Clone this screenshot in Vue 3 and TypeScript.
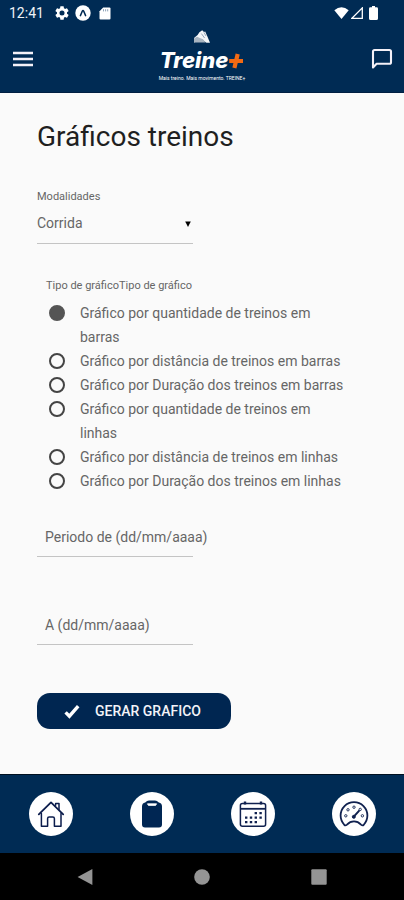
<script setup lang="ts">
import { ref } from 'vue'

const modality = ref('Corrida')
const modalities: string[] = ['Corrida', 'Caminhada', 'Ciclismo']

const chart = ref(0)
const charts: string[] = [
  'Gráfico por quantidade de treinos em barras',
  'Gráfico por distância de treinos em barras',
  'Gráfico por Duração dos treinos em barras',
  'Gráfico por quantidade de treinos em linhas',
  'Gráfico por distância de treinos em linhas',
  'Gráfico por Duração dos treinos em linhas',
]

const from = ref('')
const to = ref('')
</script>

<template>
  <div class="page">
    <header class="top">
      <div class="status">
        <span class="time">12:41</span>
        <svg class="gear" width="14" height="14" viewBox="2 2 20 20" fill="#fff">
          <path d="M19.14 12.94c.04-.3.06-.61.06-.94s-.02-.64-.07-.94l2.03-1.58a.49.49 0 0 0 .12-.61l-1.92-3.32a.49.49 0 0 0-.59-.22l-2.39.96a7 7 0 0 0-1.62-.94l-.36-2.54a.48.48 0 0 0-.48-.41h-3.84a.48.48 0 0 0-.47.41l-.36 2.54a7 7 0 0 0-1.62.94l-2.39-.96a.49.49 0 0 0-.59.22L2.74 8.87a.48.48 0 0 0 .12.61l2.03 1.58a6.6 6.6 0 0 0 0 1.88l-2.03 1.58a.49.49 0 0 0-.12.61l1.92 3.32c.12.22.37.29.59.22l2.39-.96c.5.38 1.03.7 1.62.94l.36 2.54c.05.24.24.41.48.41h3.84c.24 0 .44-.17.47-.41l.36-2.54a7 7 0 0 0 1.62-.94l2.39.96c.22.08.47 0 .59-.22l1.92-3.32a.48.48 0 0 0-.12-.61zM12 15.6a3.6 3.6 0 1 1 0-7.2 3.6 3.6 0 0 1 0 7.2z" />
        </svg>
        <svg class="expo" width="16" height="16" viewBox="0 0 16 16">
          <circle cx="8" cy="8" r="7.7" fill="#fff" />
          <path d="M5.4 10.6 7.3 6.2Q8 5 8.7 6.2L10.6 10.6" fill="none" stroke="#002b54" stroke-width="1.5" stroke-linecap="round" />
        </svg>
        <svg class="card" width="12" height="13" viewBox="0 0 12 13">
          <path d="M4.2.5H10.4Q11.5.5 11.5 1.6V11.4Q11.5 12.5 10.4 12.5H1.6Q.5 12.5 .5 11.4V4.2Z" fill="#fff" />
          <path d="M4.5 2.2V4.4M6.6 2.2V4.4M8.7 2.2V4.4" stroke="#8ea3b8" stroke-width="1" />
        </svg>
        <span class="grow"></span>
        <svg width="15" height="12" viewBox="0 0 15 12">
          <path d="M7.5 12 .3 3.2Q7.5-2.6 14.7 3.2Z" fill="#fff" />
        </svg>
        <svg class="signal" width="12" height="12" viewBox="0 0 12 12">
          <path d="M11.3.9V11.3H.9Z" fill="none" stroke="#fff" stroke-width="1.3" />
        </svg>
        <svg class="battery" width="9" height="14" viewBox="0 0 9 14">
          <path d="M3 0H6V1.3H7.6Q9 1.3 9 2.7V12.4Q9 14 7.4 14H1.6Q0 14 0 12.4V2.7Q0 1.3 1.4 1.3H3Z" fill="#fff" />
        </svg>
      </div>
      <div class="bar">
        <button class="icon-button" type="button" aria-label="Menu">
          <svg width="20" height="16" viewBox="0 0 20 16">
            <path d="M0 2H20M0 8H20M0 14H20" stroke="#f4f1f8" stroke-width="2.4" />
          </svg>
        </button>
        <div class="brand">
          <svg width="16" height="14" viewBox="0 0 16 14">
            <path d="M0 8 3.6 5 5.4 2.2 8.2.2 10 2 11.2 1.6 13.4 6.6 16 12.8 12.4 12.8 8 9.4 0 12.4Z" fill="#f4f6f8" />
            <path d="M0 8.6 3 6.8 5.8 8 9 9.2 11.6 12.6H0Z" fill="#a8b4c0" />
            <path d="M7.4 3.6 10.6 8M10 2.4 12 6" stroke="#6f87a0" stroke-width=".7" />
          </svg>
          <strong class="name">Treine<svg width="16" height="16" viewBox="0 0 16 16"><path d="M9.7 1 6.4 15M1.2 8H15" stroke="#f26a14" stroke-width="4.2" fill="none" /></svg></strong>
          <span class="tagline">Mais treino. Mais movimento. TREINE+</span>
        </div>
        <button class="icon-button" type="button" aria-label="Mensagens">
          <svg width="22" height="22" viewBox="0 0 22 22">
            <path d="M2 19.4V3.6Q2 2 3.6 2H18.4Q20 2 20 3.6V14.2Q20 15.8 18.4 15.8H5.6Z" fill="none" stroke="#f4f1f8" stroke-width="2.1" stroke-linejoin="round" />
          </svg>
        </button>
      </div>
    </header>

    <main class="content">
      <h1>Gráficos treinos</h1>
      <form @submit.prevent>
        <div class="select-field">
          <label class="caption" for="modality">Modalidades</label>
          <div class="select-box">
            <select id="modality" v-model="modality">
              <option v-for="m in modalities" :key="m">{{ m }}</option>
            </select>
            <svg class="arrow" width="6" height="6" viewBox="0 0 6 6">
              <path d="M.2.4H5.8L3 6Z" fill="#000" />
            </svg>
          </div>
        </div>

        <fieldset>
          <legend class="caption">Tipo de gráficoTipo de gráfico</legend>
          <label v-for="(c, i) in charts" :key="c" class="option">
            <input v-model="chart" type="radio" name="chart" :value="i" />
            <span>{{ c }}</span>
          </label>
        </fieldset>

        <div class="date-field">
          <label for="from">Periodo de (dd/mm/aaaa)</label>
          <input id="from" v-model="from" type="text" />
        </div>
        <div class="date-field">
          <label for="to">A (dd/mm/aaaa)</label>
          <input id="to" v-model="to" type="text" />
        </div>

        <button class="submit" type="submit">
          <svg width="16" height="15" viewBox="0 0 16 15">
            <path d="M1.6 8.4 5.4 12.2 14.2 2.2" fill="none" stroke="#fff" stroke-width="3.4" />
          </svg>
          GERAR GRAFICO
        </button>
      </form>
    </main>

    <nav class="tabs">
      <a href="#inicio" aria-label="Início">
        <svg width="28" height="28" viewBox="0 0 28 28" fill="none" stroke="#0b1c4c" stroke-width="1.5" stroke-linejoin="round" stroke-linecap="round">
          <path d="M1.8 14.4 14 2.4 26.2 14.4" stroke-width="1.8" />
          <path d="M18.6 5.2V3.6H22V9.6" />
          <path d="M4.4 13.4V26.2H10.6V18.6Q10.6 17 12.2 17H15.8Q17.4 17 17.4 18.6V26.2H24V13.4" />
        </svg>
      </a>
      <a href="#treinos" aria-label="Treinos">
        <svg width="22" height="28" viewBox="0 0 22 28">
          <path d="M4.2 2.6Q6 .4 8 .4H14Q16 .4 17.8 2.6Q21 3.4 21 6.4V24.6Q21 27.6 18 27.6H4Q1 27.6 1 24.6V6.4Q1 3.4 4.2 2.6Z" fill="#002653" />
          <path d="M6.4 3.8H15.6L14.6 5.4H7.4Z" fill="#fff" stroke="#fff" stroke-width=".8" />
        </svg>
      </a>
      <a href="#calendario" aria-label="Calendário">
        <svg width="28" height="28" viewBox="0 0 28 28" fill="none" stroke="#10214f">
          <rect x="1.4" y="3.6" width="25.2" height="22.6" rx="2" stroke-width="1.5" />
          <path d="M1.4 8.8H26.6" stroke-width="1.8" />
          <path d="M6 1.6V4.6M22 1.6V4.6" stroke-width="2.4" />
          <path d="M15.6 13.2H23M6 17.6H23M6 22.2H18.2" stroke-width="2.2" stroke-dasharray="2.4 2.4" />
        </svg>
      </a>
      <a href="#desempenho" aria-label="Desempenho">
        <svg width="30" height="28" viewBox="0 0 30 28" fill="none" stroke="#10214f">
          <path d="M5.4 25Q1.6 20.8 1.6 15.6A13.4 13.4 0 0 1 28.4 15.6Q28.4 20.8 24.6 25Q23.6 26 22 24.6Q19 21.4 15 21.4T8 24.6Q6.4 26 5.4 25Z" stroke-width="1.8" stroke-linejoin="round" />
          <path d="M15 16.4 20 10.8" stroke-width="2" stroke-linecap="round" />
          <circle cx="14.8" cy="16.8" r="1.5" fill="#10214f" />
          <g fill="#fff" stroke-width=".9">
            <circle cx="6.8" cy="15.8" r="1.2" />
            <circle cx="9" cy="9.8" r="1.2" />
            <circle cx="15" cy="7.2" r="1.2" />
            <circle cx="21.2" cy="9.4" r="1.2" />
            <circle cx="23.4" cy="15.8" r="1.2" />
          </g>
        </svg>
      </a>
    </nav>

    <div class="system">
      <button type="button" aria-label="Voltar">
        <svg width="16" height="18" viewBox="0 0 16 18"><path d="M15.4 1V17L.6 9Z" fill="#949494" /></svg>
      </button>
      <button type="button" aria-label="Tela inicial">
        <svg width="16" height="16" viewBox="0 0 16 16"><circle cx="8" cy="8" r="7.8" fill="#949494" /></svg>
      </button>
      <button type="button" aria-label="Recentes">
        <svg width="16" height="16" viewBox="0 0 16 16"><rect x=".3" y=".3" width="15.4" height="15.4" rx="1" fill="#949494" /></svg>
      </button>
    </div>
  </div>
</template>

<style>
body {
  margin: 0;
  background: #fafafa;
}
</style>

<style scoped>
.page {
  display: flex;
  flex-direction: column;
  min-height: 100vh;
  background: #fafafa;
  color: #666;
  font: 14px/24px Roboto, sans-serif;
}
svg {
  display: block;
  flex: none;
}
button {
  padding: 0;
  border: 0;
  background: none;
  font: inherit;
  cursor: pointer;
}
.top {
  background: #002b54;
  color: #fff;
  border-bottom: 1px solid #001f42;
}
.status {
  display: flex;
  align-items: center;
  height: 24px;
  padding: 1px 26px 0 9px;
}
.time {
  color: #eef2f6;
}
.gear {
  margin-left: 11px;
}
.expo {
  margin-left: 6px;
}
.card {
  margin-left: 8px;
}
.grow {
  flex: 1;
}
.signal {
  margin-left: 2px;
}
.battery {
  margin-left: 6px;
}
.bar {
  display: flex;
  align-items: center;
  justify-content: space-between;
  height: 67px;
  padding: 0 11px 0 13px;
}
.icon-button {
  display: flex;
}
.brand {
  display: flex;
  flex-direction: column;
  align-items: center;
  padding-bottom: 6px;
}
.name {
  display: flex;
  align-items: center;
  margin: 4px 0 2px;
  font: italic 800 22px/25px Inter, sans-serif;
}
.tagline {
  font-size: 5px;
  line-height: 6px;
}
.content {
  flex: 1;
  padding: 28px 37px 45px;
}
h1 {
  margin: 0 0 36px;
  font-size: 28px;
  line-height: 32px;
  font-weight: 400;
  color: #1f1f1f;
}
.caption {
  display: block;
  padding: 0;
  font-size: 11px;
  line-height: 16px;
}
.select-field,
.date-field {
  width: 156px;
}
.select-box {
  display: flex;
  align-items: center;
  border-bottom: 1px solid #c4c4c4;
}
select {
  flex: 1;
  min-width: 0;
  height: 38px;
  padding: 0 0 2px;
  border: 0;
  background: none;
  appearance: none;
  font: inherit;
  color: inherit;
}
.arrow {
  margin-right: 2px;
}
fieldset {
  margin: 34px 0 24px;
  padding: 0 0 0 9px;
  border: 0;
}
legend {
  margin-bottom: 7px;
}
.option {
  display: flex;
  align-items: flex-start;
  gap: 15px;
  padding-left: 3px;
}
.option span {
  max-width: 267px;
}
.option input {
  flex: none;
  width: 16px;
  height: 16px;
  margin: 4px 0 0;
  appearance: none;
  border: 2px solid #444;
  border-radius: 50%;
}
.option input:checked {
  border-color: #555;
  background: #555;
}
.date-field {
  display: grid;
  grid-template-columns: 100%;
  margin-bottom: 48px;
}
.date-field label,
.date-field input {
  grid-area: 1 / 1;
}
.date-field label {
  align-self: center;
  padding-left: 8px;
  white-space: nowrap;
}
.date-field input {
  box-sizing: border-box;
  width: 100%;
  height: 40px;
  padding: 0 8px;
  border: 0;
  border-bottom: 1px solid #c4c4c4;
  background: none;
  font: inherit;
}
.submit {
  display: flex;
  align-items: center;
  gap: 15px;
  height: 36px;
  padding: 0 30px 0 27px;
  border-radius: 13px;
  background: #002651;
  color: #f3f3f8;
  font-weight: 500;
}
.tabs {
  display: grid;
  grid-template-columns: repeat(4, 1fr);
  place-items: center;
  height: 78px;
  background: #002b54;
  border-top: 1px solid #001020;
}
.tabs a {
  display: grid;
  place-items: center;
  width: 44px;
  height: 44px;
  border-radius: 50%;
  background: #fff;
}
.system {
  display: grid;
  grid-template-columns: repeat(3, 1fr);
  place-items: center;
  height: 47px;
  padding: 0 26px;
  background: #000;
}
</style>
